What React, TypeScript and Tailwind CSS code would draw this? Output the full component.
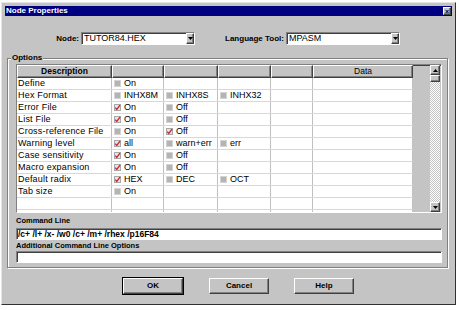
import React from 'react';

type Opt = [string, boolean];

const rows: [string, Opt[]][] = [
  ['Define', [['On', false]]],
  ['Hex Format', [['INHX8M', false], ['INHX8S', false], ['INHX32', false]]],
  ['Error File', [['On', true], ['Off', false]]],
  ['List File', [['On', true], ['Off', false]]],
  ['Cross-reference File', [['On', false], ['Off', true]]],
  ['Warning level', [['all', true], ['warn+err', false], ['err', false]]],
  ['Case sensitivity', [['On', true], ['Off', false]]],
  ['Macro expansion', [['On', true], ['Off', false]]],
  ['Default radix', [['HEX', true], ['DEC', false], ['OCT', false]]],
  ['Tab size', [['On', false]]],
  ['', []],
  ['', []],
];

const colW = ['w-[52px]', 'w-[54px]', 'w-[53px]', 'w-[42px]', 'w-[100px]'];

const raised =
  'border border-t-white border-l-white border-r-[#404040] border-b-[#404040] shadow-[inset_-1px_-1px_0_#808080]';
const sunken =
  'border border-t-[#808080] border-l-[#808080] border-r-white border-b-white shadow-[inset_1px_1px_0_#404040]';

function Box({ on }: { on: boolean }) {
  return (
    <svg width="7" height="7" viewBox="0 0 7 7" className="shrink-0">
      <rect x="0" y="0" width="7" height="7" fill={on ? '#e4e4e4' : '#b4b4b4'} />
      <rect x="0.5" y="0.5" width="6" height="6" fill="none" stroke={on ? '#a8a8a8' : '#d4d4d4'} />
      {on && <path d="M1.2 3.6 L2.8 5.4 L6 1.2" fill="none" stroke="#d02030" strokeWidth="1.3" />}
    </svg>
  );
}

function Arrow({ up }: { up?: boolean }) {
  return (
    <svg width="5" height="3" viewBox="0 0 5 3">
      <path d={up ? 'M0 3 L2.5 0 L5 3 Z' : 'M0 0 L5 0 L2.5 3 Z'} fill="#000" />
    </svg>
  );
}

function Combo({ value, w }: { value: string; w: string }) {
  return (
    <div className={`${w} h-[13px] bg-white flex items-center ${sunken}`}>
      <span className="flex-1 pl-[2px] text-[9px] leading-none text-black">{value}</span>
      <div className={`w-[8px] h-[11px] bg-[#c4c4c4] flex items-center justify-center ${raised}`}>
        <Arrow />
      </div>
    </div>
  );
}

export default function App() {
  return (
    <div className="w-[459px] h-[310px] bg-white overflow-hidden font-['Liberation_Sans',Arial,sans-serif] text-black">
      <div className="ml-[1px] mt-[2px] w-[455px] h-[303px] bg-[#c4c4c4] border border-t-[#e4e4e4] border-l-[#e4e4e4] border-r-[#303030] border-b-[#303030] p-[3px] flex flex-col">
        {/* Title bar */}
        <div className="h-[10px] bg-[#000080] flex items-center justify-between pl-[1px] pr-[1px]">
          <span className="text-white font-bold text-[8px] leading-none">Node Properties</span>
          <div className={`w-[8px] h-[8px] bg-[#c4c4c4] flex items-center justify-center text-[7px] leading-none font-bold ${raised}`}>
            ×
          </div>
        </div>

        {/* Node / Language tool */}
        <div className="mt-[16px] h-[13px] flex items-center">
          <span className="w-[76px] pr-[2px] text-right font-bold text-[8px] leading-none">Node:</span>
          <Combo value="TUTOR84.HEX" w="w-[114px]" />
          <span className="w-[91px] pr-[2px] text-right font-bold text-[8px] leading-none">Language Tool:</span>
          <Combo value="MPASM" w="w-[114px]" />
        </div>

        {/* Options group */}
        <div className="relative mt-[13px] ml-[2px] mr-[4px] border border-[#808080] shadow-[inset_1px_1px_0_#fff,1px_1px_0_#fff] pt-[5px] pl-[8px] pr-[5px] pb-[4px]">
          <span className="absolute -top-[6px] left-[3px] px-[1px] bg-[#c4c4c4] font-bold text-[8px] leading-[10px]">
            Options
          </span>

          {/* Grid */}
          <div className={`h-[149px] flex bg-[#c4c4c4] overflow-hidden ${sunken}`}>
            <div className="w-[396px] flex flex-col">
              <div className="h-[13px] flex shrink-0">
                <div className={`w-[95px] flex items-center justify-center font-bold text-[8.5px] leading-none ${raised}`}>
                  Description
                </div>
                {colW.map((w, i) => (
                  <div key={i} className={`${w} flex items-center justify-center text-[8.5px] leading-none ${raised}`}>
                    {i === 4 ? 'Data' : ''}
                  </div>
                ))}
              </div>
              {rows.map(([label, opts], r) => (
                <div key={r} className="h-[12px] flex shrink-0 bg-white border-b border-[#d8d8d8]">
                  <div className="w-[95px] border-r border-[#c0c0c0] pl-[1px] flex items-center text-[9px] tracking-[0.2px] leading-none">
                    {label}
                  </div>
                  {colW.map((w, i) => (
                    <div key={i} className={`${w} border-r border-[#c0c0c0] pl-[2px] flex items-center gap-[3px] text-[9px] leading-none`}>
                      {opts[i] && (
                        <>
                          <Box on={opts[i][1]} />
                          <span>{opts[i][0]}</span>
                        </>
                      )}
                    </div>
                  ))}
                </div>
              ))}
            </div>
            <div className="flex-1" />
            {/* Scrollbar */}
            <div className="w-[10px] mr-[1px] flex flex-col">
              <div className={`h-[10px] bg-[#c4c4c4] flex items-center justify-center shrink-0 ${raised}`}>
                <Arrow up />
              </div>
              <div className={`h-[7px] bg-[#c4c4c4] shrink-0 ${raised}`} />
              <div className="flex-1 bg-[repeating-conic-gradient(#ffffff_0_25%,#c4c4c4_0_50%)] bg-[length:2px_2px]" />
              <div className={`h-[10px] bg-[#c4c4c4] flex items-center justify-center shrink-0 ${raised}`}>
                <Arrow />
              </div>
            </div>
          </div>

          <div className="mt-[3px] h-[10px] flex items-center font-bold text-[7.5px] leading-none">Command Line</div>
          <div className={`mt-[2px] h-[12px] bg-white flex items-center pl-[1px] font-bold text-[8.5px] leading-none ${sunken}`}>
            /c+ /l+ /x- /w0 /c+ /m+ /rhex /p16F84
          </div>
          <div className="mt-[1px] h-[10px] flex items-center font-bold text-[7.5px] leading-none">
            Additional Command Line Options
          </div>
          <div className={`h-[12px] bg-white ${sunken}`} />
        </div>

        {/* Buttons */}
        <div className="mt-[10px] h-[16px] flex">
          <button className={`ml-[118px] w-[60px] h-[16px] bg-[#c4c4c4] font-bold text-[8px] leading-none outline outline-1 outline-black ${raised}`}>
            OK
          </button>
          <button className={`ml-[26px] w-[60px] h-[16px] bg-[#c4c4c4] font-bold text-[8px] leading-none ${raised}`}>
            Cancel
          </button>
          <button className={`ml-[25px] w-[60px] h-[16px] bg-[#c4c4c4] font-bold text-[8px] leading-none ${raised}`}>
            Help
          </button>
        </div>
      </div>
    </div>
  );
}
